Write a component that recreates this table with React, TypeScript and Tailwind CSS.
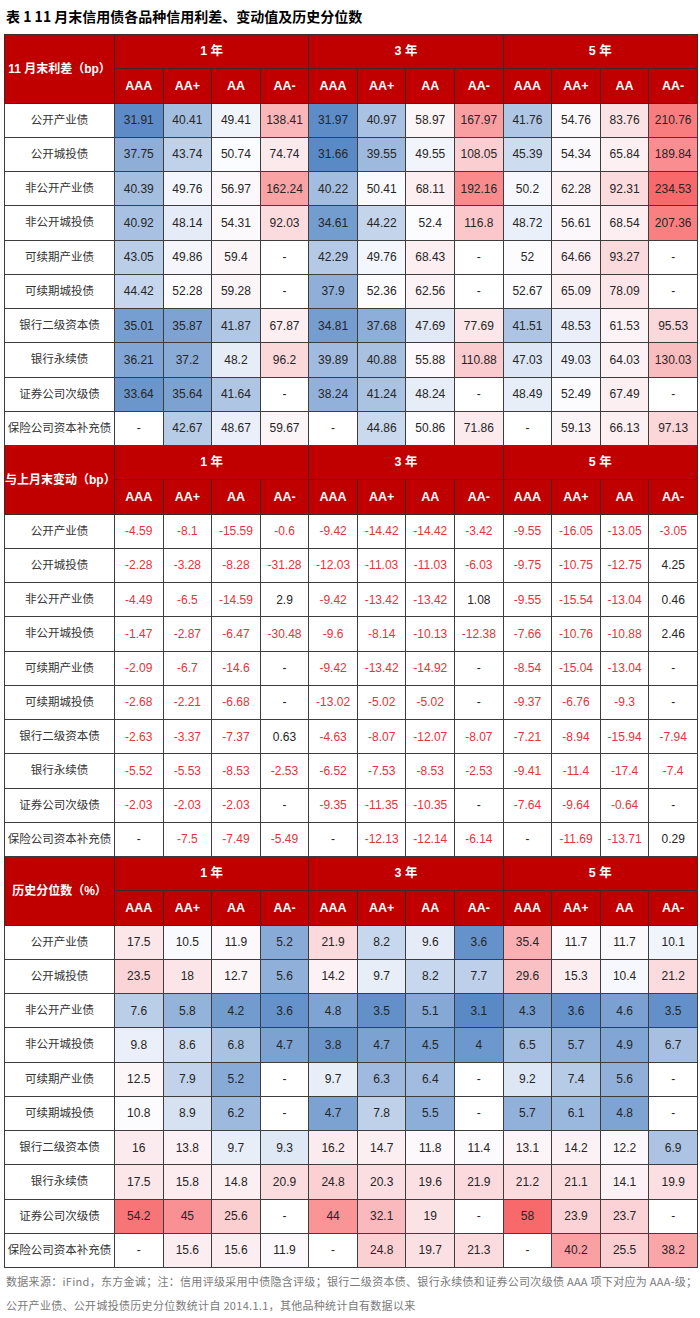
import React from "react";

const labels = [
  "公开产业债",
  "公开城投债",
  "非公开产业债",
  "非公开城投债",
  "可续期产业债",
  "可续期城投债",
  "银行二级资本债",
  "银行永续债",
  "证券公司次级债",
  "保险公司资本补充债",
];

const s1 = [
  "31.91 40.41 49.41 138.41 31.97 40.97 58.97 167.97 41.76 54.76 83.76 210.76",
  "37.75 43.74 50.74 74.74 31.66 39.55 49.55 108.05 45.39 54.34 65.84 189.84",
  "40.39 49.76 56.97 162.24 40.22 50.41 68.11 192.16 50.2 62.28 92.31 234.53",
  "40.92 48.14 54.31 92.03 34.61 44.22 52.4 116.8 48.72 56.61 68.54 207.36",
  "43.05 49.86 59.4 - 42.29 49.76 68.43 - 52 64.66 93.27 -",
  "44.42 52.28 59.28 - 37.9 52.36 62.56 - 52.67 65.09 78.09 -",
  "35.01 35.87 41.87 67.87 34.81 37.68 47.69 77.69 41.51 48.53 61.53 95.53",
  "36.21 37.2 48.2 96.2 39.89 40.88 55.88 110.88 47.03 49.03 64.03 130.03",
  "33.64 35.64 41.64 - 38.24 41.24 48.24 - 48.49 52.49 67.49 -",
  "- 42.67 48.67 59.67 - 44.86 50.86 71.86 - 59.13 66.13 97.13",
];

const s2 = [
  "-4.59 -8.1 -15.59 -0.6 -9.42 -14.42 -14.42 -3.42 -9.55 -16.05 -13.05 -3.05",
  "-2.28 -3.28 -8.28 -31.28 -12.03 -11.03 -11.03 -6.03 -9.75 -10.75 -12.75 4.25",
  "-4.49 -6.5 -14.59 2.9 -9.42 -13.42 -13.42 1.08 -9.55 -15.54 -13.04 0.46",
  "-1.47 -2.87 -6.47 -30.48 -9.6 -8.14 -10.13 -12.38 -7.66 -10.76 -10.88 2.46",
  "-2.09 -6.7 -14.6 - -9.42 -13.42 -14.92 - -8.54 -15.04 -13.04 -",
  "-2.68 -2.21 -6.68 - -13.02 -5.02 -5.02 - -9.37 -6.76 -9.3 -",
  "-2.63 -3.37 -7.37 0.63 -4.63 -8.07 -12.07 -8.07 -7.21 -8.94 -15.94 -7.94",
  "-5.52 -5.53 -8.53 -2.53 -6.52 -7.53 -8.53 -2.53 -9.41 -11.4 -17.4 -7.4",
  "-2.03 -2.03 -2.03 - -9.35 -11.35 -10.35 - -7.64 -9.64 -0.64 -",
  "- -7.5 -7.49 -5.49 - -12.13 -12.14 -6.14 - -11.69 -13.71 0.29",
];

const s3 = [
  "17.5 10.5 11.9 5.2 21.9 8.2 9.6 3.6 35.4 11.7 11.7 10.1",
  "23.5 18 12.7 5.6 14.2 9.7 8.2 7.7 29.6 15.3 10.4 21.2",
  "7.6 5.8 4.2 3.6 4.8 3.5 5.1 3.1 4.3 3.6 4.6 3.5",
  "9.8 8.6 6.8 4.7 3.8 4.7 4.5 4 6.5 5.7 4.9 6.7",
  "12.5 7.9 5.2 - 9.7 6.3 6.4 - 9.2 7.4 5.6 -",
  "10.8 8.9 6.2 - 4.7 7.8 5.5 - 5.7 6.1 4.8 -",
  "16 13.8 9.7 9.3 16.2 14.7 11.8 11.4 13.1 14.2 12.2 6.9",
  "17.5 15.8 14.8 20.9 24.8 20.3 19.6 21.9 21.2 21.1 14.1 19.9",
  "54.2 45 25.6 - 44 32.1 19 - 58 23.9 23.7 -",
  "- 15.6 15.6 11.9 - 24.8 19.7 21.3 - 40.2 25.5 38.2",
];

const parse = (rows: string[]) => rows.map((r) => r.split(" "));

type RGB = [number, number, number];
const BLUE: RGB = [90, 138, 198];
const WHITE: RGB = [252, 252, 255];
const RED: RGB = [248, 105, 107];

const lerp = (a: RGB, b: RGB, t: number): string => {
  const c = a.map((v, i) => Math.round(v + (b[i] - v) * t));
  return `rgb(${c[0]},${c[1]},${c[2]})`;
};

function makeScale(rows: string[][]) {
  const vals = rows
    .flat()
    .filter((v) => v !== "-")
    .map(Number)
    .sort((a, b) => a - b);
  const min = vals[0];
  const max = vals[vals.length - 1];
  const pos = (vals.length - 1) * 0.5;
  const lo = Math.floor(pos);
  const med = vals[lo] + (vals[Math.ceil(pos)] - vals[lo]) * (pos - lo);
  return (s: string): string | undefined => {
    if (s === "-") return undefined;
    const v = Number(s);
    if (v <= med) return lerp(BLUE, WHITE, (v - min) / (med - min));
    return lerp(WHITE, RED, (v - med) / (max - med));
  };
}

const ratings = ["AAA", "AA+", "AA", "AA-"];
const years = ["1 年", "3 年", "5 年"];

const hdr =
  "bg-[#c00000] text-white font-bold border border-[#3a2a2a] text-center text-[12.5px]";
const cellB = "border border-[#3d3d3d] text-center";

function Section({
  title,
  rows,
  mode,
}: {
  title: string;
  rows: string[][];
  mode: "scale" | "sign";
}) {
  const scale = mode === "scale" ? makeScale(rows) : null;
  return (
    <>
      <tr className="h-[34.25px]">
        <td rowSpan={2} className={`${hdr} !text-[12px] px-0 whitespace-nowrap`}>
          {title}
        </td>
        {years.map((y) => (
          <td key={y} colSpan={4} className={hdr}>
            {y}
          </td>
        ))}
      </tr>
      <tr className="h-[34.25px]">
        {years.map((y) =>
          ratings.map((r) => (
            <td key={y + r} className={hdr}>
              {r}
            </td>
          ))
        )}
      </tr>
      {rows.map((row, i) => (
        <tr key={i} className="h-[34.25px]">
          <td className={`${cellB} text-[11.5px] text-[#333] whitespace-nowrap px-0 bg-white`}>
            {labels[i]}
          </td>
          {row.map((v, j) => {
            const bg = scale ? scale(v) : undefined;
            const neg = mode === "sign" && v.startsWith("-") && v !== "-";
            return (
              <td
                key={j}
                className={`${cellB} text-[12px] ${neg ? "text-[#e3343a]" : "text-[#262626]"}`}
                style={bg ? { backgroundColor: bg } : undefined}
              >
                {v}
              </td>
            );
          })}
        </tr>
      ))}
    </>
  );
}

export default function App() {
  return (
    <div className="w-[700px] h-[1318px] bg-white font-['Liberation_Sans','Noto_Sans_CJK_SC',sans-serif] overflow-hidden">
      <div className="h-[34px] pl-[6px] pt-[6px] text-[14px] font-bold text-black leading-[20px] font-['Noto_Sans_CJK_SC',sans-serif]">
        表 1 11 月末信用债各品种信用利差、变动值及历史分位数
      </div>
      <div className="pl-[4px]">
        <table className="w-[694px] table-fixed border-collapse">
          <colgroup>
            <col className="w-[110px]" />
            {Array.from({ length: 12 }).map((_, i) => (
              <col key={i} />
            ))}
          </colgroup>
          <tbody>
            <Section title="11 月末利差（bp）" rows={parse(s1)} mode="scale" />
            <Section title="与上月末变动（bp）" rows={parse(s2)} mode="sign" />
            <Section title="历史分位数（%）" rows={parse(s3)} mode="scale" />
          </tbody>
        </table>
      </div>
      <div className="pl-[6px] pt-[1px] text-[11px] leading-[24px] text-[#7a7a7a] tracking-[0.3px] font-['Noto_Sans_CJK_SC',sans-serif]">
        <div className="whitespace-nowrap">
          数据来源：iFind，东方金诚；注：信用评级采用中债隐含评级；银行二级资本债、银行永续债和证券公司次级债 AAA 项下对应为 AAA-级；
        </div>
        <div className="whitespace-nowrap">
          公开产业债、公开城投债历史分位数统计自 2014.1.1，其他品种统计自有数据以来
        </div>
      </div>
    </div>
  );
}
